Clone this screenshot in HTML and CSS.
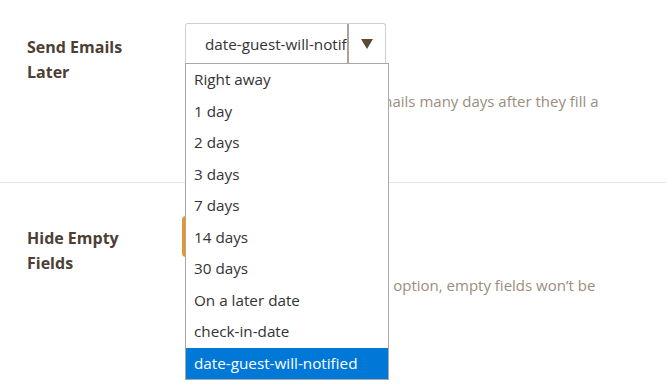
FILE: index.html
```html
<!DOCTYPE html>
<html>
<head>
<meta charset="utf-8">
<link rel="stylesheet" href="styles.css">
</head>
<body>
<div class="settings">
  <div class="row row-first">
    <div class="label">Send Emails Later</div>
    <div class="control">
      <div class="select-wrap">
        <div class="select">
          <span class="select-value">date-guest-will-notified</span>
          <span class="select-arrow"><svg width="12" height="10" viewBox="0 0 12 10"><path d="M0 0 H12 L6 10 Z" fill="#5a4a3b"/></svg></span>
        </div>
        <ul class="dropdown">
          <li>Right away</li>
          <li>1 day</li>
          <li>2 days</li>
          <li>3 days</li>
          <li>7 days</li>
          <li>14 days</li>
          <li>30 days</li>
          <li>On a later date</li>
          <li>check-in-date</li>
          <li class="selected">date-guest-will-notified</li>
        </ul>
      </div>
      <p class="desc">Use this option to send all emails many days after they fill a form.</p>
    </div>
  </div>
  <div class="row row-second">
    <div class="label">Hide Empty Fields</div>
    <div class="control">
      <div class="toggle"></div>
      <p class="desc">When you have activated this option, empty fields won’t be visible.</p>
    </div>
  </div>
</div>
</body>
</html>
```

FILE: styles.css
```css
html, body {
  margin: 0;
  padding: 0;
  background: #ffffff;
}
body {
  font-family: "Open Sans", "Noto Sans", sans-serif;
  width: 666px;
  height: 391px;
  overflow: hidden;
}
.settings {
  display: flex;
  flex-direction: column;
}
.row {
  display: flex;
  align-items: flex-start;
  padding-left: 27px;
}
.row-first {
  padding-top: 23px;
  padding-bottom: 43px;
  border-bottom: 1px solid #e6e6e6;
}
.row-second {
  padding-top: 33px;
}
.label {
  width: 158px;
  box-sizing: border-box;
  padding-right: 50px;
  font-size: 16px;
  font-weight: 700;
  line-height: 25px;
  color: #4c4034;
}
.row-first .label {
  margin-top: 12px;
}
.row-second .label {
  margin-top: 10px;
}
.control {
  width: 430px;
  display: flex;
  flex-direction: column;
}
.select-wrap {
  position: relative;
  width: 201px;
}
.select {
  height: 40px;
  box-sizing: border-box;
  border: 1px solid #cfcfcf;
  border-bottom: none;
  border-radius: 3px 3px 0 0;
  display: flex;
  align-items: stretch;
  background: #fff;
}
.select-value {
  flex: 1;
  overflow: hidden;
  white-space: nowrap;
  padding-left: 19px;
  font-size: 15.25px;
  line-height: 40px;
  color: #333333;
  border-right: 2px solid #b0a294;
}
.select-arrow {
  width: 36px;
  display: flex;
  align-items: center;
  justify-content: center;
}
.dropdown {
  position: absolute;
  left: 0;
  top: 40px;
  width: 204px;
  box-sizing: border-box;
  margin: 0;
  padding: 0;
  list-style: none;
  background: #fff;
  border: 1px solid #a8a8a8;
  z-index: 2;
}
.dropdown li {
  height: 31.5px;
  line-height: 31.5px;
  padding-left: 8px;
  font-size: 15.25px;
  color: #333333;
  white-space: nowrap;
}
.dropdown li.selected {
  background: #0078d7;
  color: #ffffff;
}
.desc {
  margin: 26px 0 0 0;
  font-size: 15px;
  line-height: 25px;
  color: #9c8c7c;
}
.toggle {
  width: 52px;
  height: 41px;
  margin-left: -3px;
  border-radius: 4px;
  background: #e8962b;
}
.row-second .desc {
  margin-top: 16px;
}
```
